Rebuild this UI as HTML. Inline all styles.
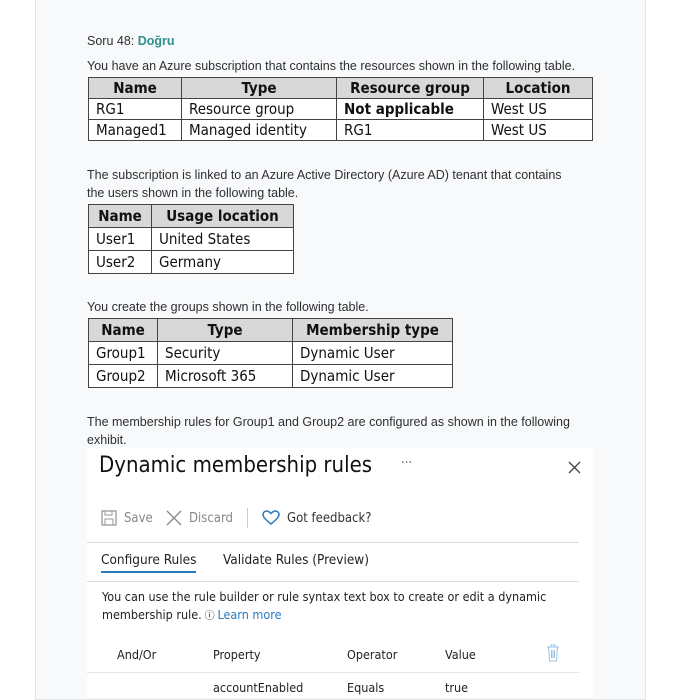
<html><head><style>
body{margin:0;background:#fff;width:689px;height:691px;overflow:hidden;position:relative;font-family:"Liberation Sans",sans-serif}
.card{position:absolute;left:35px;top:-2px;width:609px;height:700px;background:#f8f9fa;border:1px solid #e3e4e6}
.a{position:absolute;white-space:nowrap}
.t{font-size:12.5px;color:#2d2f31}
table{position:absolute;border-collapse:collapse;font-family:"DejaVu Sans Condensed","Liberation Sans",sans-serif;font-size:15px;color:#111}
td,th{border:1px solid #444;padding:0 7px;text-align:left;background:#fff;line-height:20px}
.tall td,.tall th{line-height:22px}
th{background:#d8d8d8;text-align:center;font-weight:bold}
.img{position:absolute;left:87px;top:448px;width:506px;height:250px;background:#fff;font-family:"DejaVu Sans Condensed","Liberation Sans",sans-serif;color:#222}
</style></head><body>
<div class="card"></div>
<div class="a t" style="left:87px;top:34px">Soru 48: <b style="color:#2d8f8f">Doğru</b></div>
<div class="a t" style="left:87px;top:59px">You have an Azure subscription that contains the resources shown in the following table.</div>
<table style="left:88px;top:77px;width:505px">
<tr><th style="width:78px">Name</th><th style="width:140px">Type</th><th style="width:132px">Resource group</th><th>Location</th></tr>
<tr><td>RG1</td><td>Resource group</td><td><b>Not applicable</b></td><td>West US</td></tr>
<tr><td>Managed1</td><td>Managed identity</td><td>RG1</td><td>West US</td></tr></table>
<div class="a t" style="left:87px;top:166px;line-height:18px">The subscription is linked to an Azure Active Directory (Azure AD) tenant that contains<br>the users shown in the following table.</div>
<table class="tall" style="left:88px;top:204px;width:206px">
<tr><th style="width:48px">Name</th><th>Usage location</th></tr>
<tr><td>User1</td><td>United States</td></tr>
<tr><td>User2</td><td>Germany</td></tr></table>
<div class="a t" style="left:87px;top:300px">You create the groups shown in the following table.</div>
<table class="tall" style="left:88px;top:318px;width:365px">
<tr><th style="width:54px">Name</th><th style="width:120px">Type</th><th>Membership type</th></tr>
<tr><td>Group1</td><td>Security</td><td>Dynamic User</td></tr>
<tr><td>Group2</td><td>Microsoft 365</td><td>Dynamic User</td></tr></table>
<div class="a t" style="left:87px;top:413px;line-height:18px">The membership rules for Group1 and Group2 are configured as shown in the following<br>exhibit.</div>
<div class="img">
<div class="a" style="left:12px;top:5px;font-size:22px;color:#111">Dynamic membership rules</div>
<div class="a" style="left:314px;top:8px;font-size:13px;color:#666">···</div>
<svg class="a" style="left:481px;top:13px" width="13" height="13"><path d="M1 1L12 12M12 1L1 12" stroke="#444" stroke-width="1.3"/></svg>
<svg class="a" style="left:14px;top:62px" width="16" height="16"><rect x="1" y="1" width="14" height="14" fill="none" stroke="#999" stroke-width="1.3"/><rect x="4" y="9" width="8" height="6" fill="none" stroke="#999"/><rect x="4" y="1" width="7" height="4" fill="none" stroke="#999"/></svg>
<div class="a" style="left:37px;top:63px;font-size:13px;color:#888">Save</div>
<svg class="a" style="left:79px;top:62px" width="16" height="16"><path d="M1 1L15 15M15 1L1 15" stroke="#888" stroke-width="1.3"/></svg>
<div class="a" style="left:102px;top:63px;font-size:13px;color:#888">Discard</div>
<div class="a" style="left:160px;top:60px;width:1px;height:20px;background:#ccc"></div>
<svg class="a" style="left:175px;top:62px" width="18" height="16"><path d="M9 14C3 9 1 7 1 4.5 1 2.5 2.7 1 4.7 1 6.5 1 8 2.5 9 3.5 10 2.5 11.5 1 13.3 1 15.3 1 17 2.5 17 4.5 17 7 15 9 9 14Z" fill="none" stroke="#2a7abf" stroke-width="1.5"/></svg>
<div class="a" style="left:200px;top:63px;font-size:13px;color:#333">Got feedback?</div>
<div class="a" style="left:0;top:94px;width:492px;height:1px;background:#ddd"></div>
<div class="a" style="left:14px;top:104px;font-size:13.5px">Configure Rules</div>
<div class="a" style="left:136px;top:104px;font-size:13.5px">Validate Rules (Preview)</div>
<div class="a" style="left:0;top:133px;width:492px;height:1px;background:#ddd"></div>
<div class="a" style="left:14px;top:123px;width:95px;height:2px;background:#2a7abf"></div>
<div class="a" style="left:15px;top:140px;font-size:12.5px;line-height:18px">You can use the rule builder or rule syntax text box to create or edit a dynamic<br>membership rule.<span style="font-size:10px"> ⓘ </span> <span style="color:#2a7abf">Learn more</span></div>
<div class="a" style="left:30px;top:199px;font-size:12.5px">And/Or</div>
<div class="a" style="left:126px;top:199px;font-size:12.5px">Property</div>
<div class="a" style="left:260px;top:199px;font-size:12.5px">Operator</div>
<div class="a" style="left:358px;top:199px;font-size:12.5px">Value</div>
<svg class="a" style="left:459px;top:196px" width="14" height="18"><path d="M1 3H13M5 3V1H9V3M2.5 3L3.5 17H10.5L11.5 3M5.5 6V14M7 6V14M8.5 6V14" fill="none" stroke="#9cc3e6" stroke-width="1"/></svg>
<div class="a" style="left:0;top:224px;width:492px;height:1px;background:#e6e6e6"></div>
<div class="a" style="left:126px;top:232px;font-size:12.5px">accountEnabled</div>
<div class="a" style="left:260px;top:232px;font-size:12.5px">Equals</div>
<div class="a" style="left:358px;top:232px;font-size:12.5px">true</div>
</div>
</body></html>
